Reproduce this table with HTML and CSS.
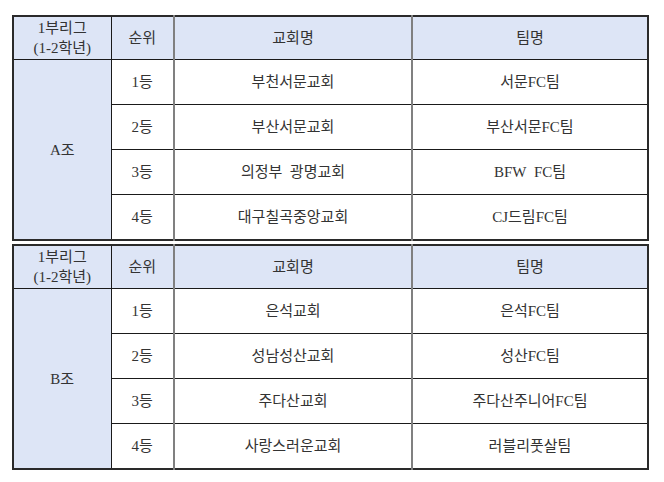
FILE: index.html
```html
<!DOCTYPE html>
<html lang="ko">
<head>
<meta charset="utf-8">
<link rel="stylesheet" href="styles.css">
</head>
<body>
<div class="page">
  <table class="league">
    <colgroup><col class="c1"><col class="c2"><col class="c3"><col class="c4"></colgroup>
    <tr class="head">
      <td class="grp">1부리그<br>(1-2학년)</td><td class="rk">순위</td><td class="gy">교회명</td><td class="gy">팀명</td>
    </tr>
    <tr><td class="grp" rowspan="4">A조</td><td class="rk">1등</td><td class="gy">부천서문교회</td><td class="gy">서문FC팀</td></tr>
    <tr><td class="rk">2등</td><td class="gy">부산서문교회</td><td class="gy">부산서문FC팀</td></tr>
    <tr><td class="rk">3등</td><td class="gy">의정부&nbsp;&nbsp;광명교회</td><td class="gy">BFW&nbsp;&nbsp;FC팀</td></tr>
    <tr><td class="rk">4등</td><td class="gy">대구칠곡중앙교회</td><td class="gy">CJ드림FC팀</td></tr>
  </table>
  <table class="league">
    <colgroup><col class="c1"><col class="c2"><col class="c3"><col class="c4"></colgroup>
    <tr class="head">
      <td class="grp">1부리그<br>(1-2학년)</td><td class="rk">순위</td><td class="gy">교회명</td><td class="gy">팀명</td>
    </tr>
    <tr><td class="grp" rowspan="4">B조</td><td class="rk">1등</td><td class="gy">은석교회</td><td class="gy">은석FC팀</td></tr>
    <tr><td class="rk">2등</td><td class="gy">성남성산교회</td><td class="gy">성산FC팀</td></tr>
    <tr><td class="rk">3등</td><td class="gy">주다산교회</td><td class="gy">주다산주니어FC팀</td></tr>
    <tr><td class="rk">4등</td><td class="gy">사랑스러운교회</td><td class="gy">러블리풋살팀</td></tr>
  </table>
</div>
</body>
</html>
```
FILE: styles.css
```css
html, body { margin: 0; padding: 0; background: #fff; }
.page {
  padding: 15px 0 0 12px;
  display: flex;
  flex-direction: column;
  gap: 3px;
  font-family: "Liberation Serif", "Noto Sans CJK KR", serif;
  font-size: 15px;
  color: #333;
}
.league {
  border-collapse: collapse;
  table-layout: fixed;
  width: 635px;
  border: 2px solid #2a2a2a;
}
.c1 { width: 98px; }
.c2 { width: 63px; }
.c3 { width: 238px; }
.c4 { width: 236px; }
.league td {
  height: 44px;
  padding: 0;
  text-align: center;
  vertical-align: middle;
  border-top: 1px solid #1a1a1a;
  border-bottom: 1px solid #1a1a1a;
  line-height: 20px;
}
.league .head td { height: 42px; background: #dde5f6; }
.league td.grp { background: #dde5f6; border-right: 1px solid #1a1a1a; }
.league td.rk { border-right: 2px solid #808080; }
.league td.gy + td.gy { border-left: 2px solid #808080; }
```
